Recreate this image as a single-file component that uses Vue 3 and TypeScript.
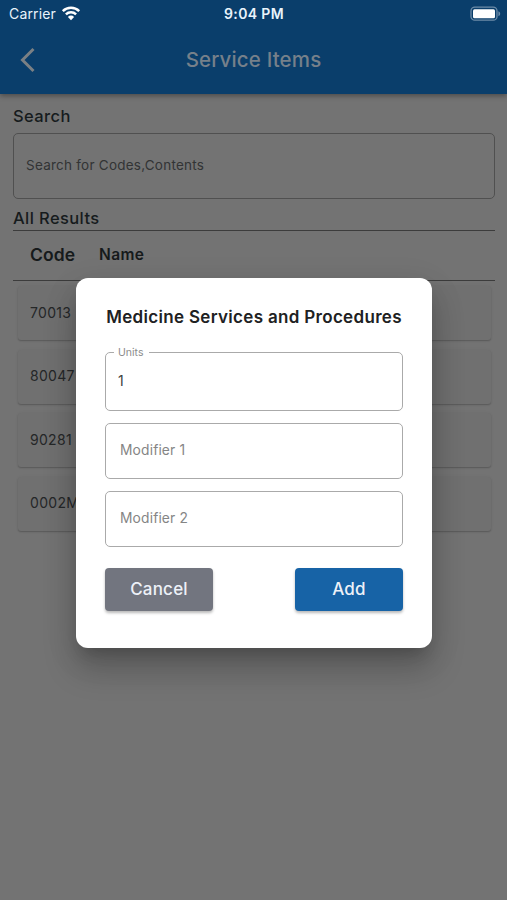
<script setup lang="ts">
import { ref } from 'vue'

interface ModifierField {
  label: string
  value: string
}

const codes: string[] = ['70013', '80047', '90281', '0002M']
const units = ref('1')
const modifiers = ref<ModifierField[]>([
  { label: 'Modifier 1', value: '' },
  { label: 'Modifier 2', value: '' },
])
</script>

<template>
  <div class="screen">
    <header class="app-header">
      <div class="status-bar">
        <div class="carrier">
          <span>Carrier</span>
          <svg class="wifi" viewBox="0 0 20 15" aria-hidden="true">
            <path d="M1.8 5.1a11.8 11.8 0 0 1 16.4 0" />
            <path d="M4.9 8.3a7.4 7.4 0 0 1 10.2 0" />
            <path class="wifi-dot" d="M6.9 10.9a4.4 4.4 0 0 1 6.2 0L10 14.2z" />
          </svg>
        </div>
        <span class="clock">9:04 PM</span>
        <svg class="battery" viewBox="0 0 31 16" aria-hidden="true">
          <rect class="battery-shell" x="1" y="1.2" width="26" height="13" rx="3.8" />
          <rect class="battery-level" x="3" y="3.2" width="22" height="9" rx="1.5" />
          <path class="battery-tip" d="M28.4 5.2c2.4.9 2.4 4.1 0 5z" />
        </svg>
      </div>
      <div class="nav-bar">
        <svg class="back" viewBox="0 0 16 26" aria-hidden="true">
          <path d="M13.5 2 2.5 13l11 11" />
        </svg>
        <h1>Service Items</h1>
      </div>
    </header>

    <main class="content">
      <h2 class="search-title">Search</h2>
      <div class="search-box"><span>Search for Codes,Contents</span></div>
      <h2 class="results-title">All Results</h2>
      <div class="table-head">
        <span class="col-code">Code</span>
        <span class="col-name">Name</span>
      </div>
      <ul class="rows">
        <li v-for="code in codes" :key="code">{{ code }}</li>
      </ul>
    </main>

    <section class="dialog" role="dialog">
      <h3>Medicine Services and Procedures</h3>
      <div class="field units">
        <span class="float-label">Units</span>
        <span class="value">{{ units }}</span>
      </div>
      <div v-for="field in modifiers" :key="field.label" class="field modifier">
        <span>{{ field.value || field.label }}</span>
      </div>
      <div class="actions">
        <button class="cancel" type="button">Cancel</button>
        <button class="add" type="button">Add</button>
      </div>
    </section>
  </div>
</template>

<style>
body {
  background: #737373;
}
</style>

<style scoped>
* {
  box-sizing: border-box;
  margin: 0;
  padding: 0;
}
.screen {
  position: relative;
  height: 900px;
  overflow: hidden;
  background: #737373;
  font-family: Inter, "Liberation Sans", sans-serif;
}
.app-header {
  position: relative;
  height: 94px;
  background: #0a3e6b;
  box-shadow: 0 2px 5px rgba(0, 0, 0, 0.35);
}
.status-bar {
  display: grid;
  grid-template-columns: 1fr auto 1fr;
  align-items: center;
  height: 27px;
  padding: 0 6px 0 9px;
  color: #e9f3fb;
  font-size: 14px;
}
.carrier {
  display: flex;
  align-items: center;
  gap: 5px;
  letter-spacing: 0.15px;
}
.wifi {
  width: 20px;
  height: 15px;
  fill: none;
  stroke: #fff;
  stroke-width: 2.5;
}
.wifi-dot {
  fill: #fff;
  stroke: none;
}
.clock {
  margin-left: -2px;
  font-weight: 600;
  letter-spacing: 0.35px;
}
.battery {
  justify-self: end;
  width: 31px;
  height: 16px;
}
.battery-shell {
  fill: none;
  stroke: #6d8ca8;
  stroke-width: 1.3;
}
.battery-level {
  fill: #fff;
}
.battery-tip {
  fill: #6d8ca8;
}
.nav-bar {
  display: grid;
  grid-template-columns: 40px 1fr 40px;
  align-items: center;
  height: 65px;
}
.back {
  width: 16px;
  height: 26px;
  margin-left: 20px;
  fill: none;
  stroke: #7b8084;
  stroke-width: 3;
}
h1 {
  color: #76808a;
  font-size: 20.5px;
  font-weight: 500;
  letter-spacing: 0.15px;
  text-align: center;
}
.content {
  padding: 13px 12.5px 0 13px;
}
h2 {
  color: #161b1d;
  font-size: 16.5px;
  font-weight: 500;
  line-height: 20px;
  letter-spacing: 0.4px;
}
.search-title {
  margin-top: -1px;
}
.search-box {
  display: flex;
  align-items: center;
  height: 66px;
  margin-top: 7px;
  padding: 0 12px 3px;
  border: 1px solid #505050;
  border-radius: 5px;
  color: #323435;
  font-size: 13.5px;
  letter-spacing: 0.24px;
}
.results-title {
  margin-top: 9px;
}
.table-head {
  display: flex;
  align-items: center;
  height: 51px;
  margin-top: 2px;
  padding: 0 17px 2px;
  border-top: 1px solid #3c3c3c;
  border-bottom: 1px solid #3c3c3c;
  color: #161a1b;
  font-weight: 600;
}
.col-code {
  width: 69px;
  font-size: 17.5px;
  letter-spacing: 0.1px;
}
.col-name {
  font-size: 15.5px;
  letter-spacing: 0.4px;
}
.rows {
  display: flex;
  flex-direction: column;
  gap: 9.6px;
  padding: 5px 4px 0 5px;
  list-style: none;
}
.rows li {
  display: flex;
  align-items: center;
  height: 54px;
  padding: 0 12px 2px;
  border-radius: 3px;
  background: #707070;
  box-shadow: 0 1px 1.5px rgba(0, 0, 0, 0.22), 0 0 4px rgba(0, 0, 0, 0.03);
  color: #252728;
  font-size: 14px;
  letter-spacing: 0.3px;
}
.dialog {
  position: absolute;
  top: 278px;
  left: 76px;
  width: 356px;
  height: 370px;
  padding: 28px 29px 0;
  border-radius: 12px;
  background: #fff;
  box-shadow: 0 11px 15px -7px rgba(0, 0, 0, 0.18), 0 20px 32px 2px rgba(0, 0, 0, 0.2), 0 8px 36px 3px rgba(0, 0, 0, 0.06);
}
h3 {
  color: #202122;
  font-size: 17px;
  font-weight: 600;
  line-height: 22px;
  letter-spacing: 0.32px;
  text-align: center;
  white-space: nowrap;
}
.field {
  display: flex;
  align-items: center;
  border: 1px solid #aaa;
  border-radius: 5px;
  font-size: 14px;
}
.units {
  position: relative;
  height: 59px;
  margin-top: 24px;
  padding: 0 12px 2px;
  color: #404040;
}
.float-label {
  position: absolute;
  top: -7px;
  left: 8px;
  padding: 0 6px 0 4px;
  background: #fff;
  color: #8b8b8b;
  font-size: 10.5px;
  line-height: 14px;
}
.modifier {
  height: 56px;
  margin-top: 12px;
  padding: 0 14px 2px;
  color: #858585;
  font-size: 13.8px;
  letter-spacing: 0.15px;
}
.actions {
  display: flex;
  justify-content: space-between;
  margin-top: 21px;
}
button {
  width: 108px;
  height: 43px;
  padding-bottom: 1px;
  border: 0;
  border-radius: 4px;
  color: #edf1f8;
  font-family: inherit;
  font-size: 17px;
  font-weight: 500;
  letter-spacing: 0.2px;
  box-shadow: 0 2px 3px rgba(0, 0, 0, 0.28);
}
.cancel {
  background: #72757f;
}
.add {
  background: #1763a6;
}
</style>
